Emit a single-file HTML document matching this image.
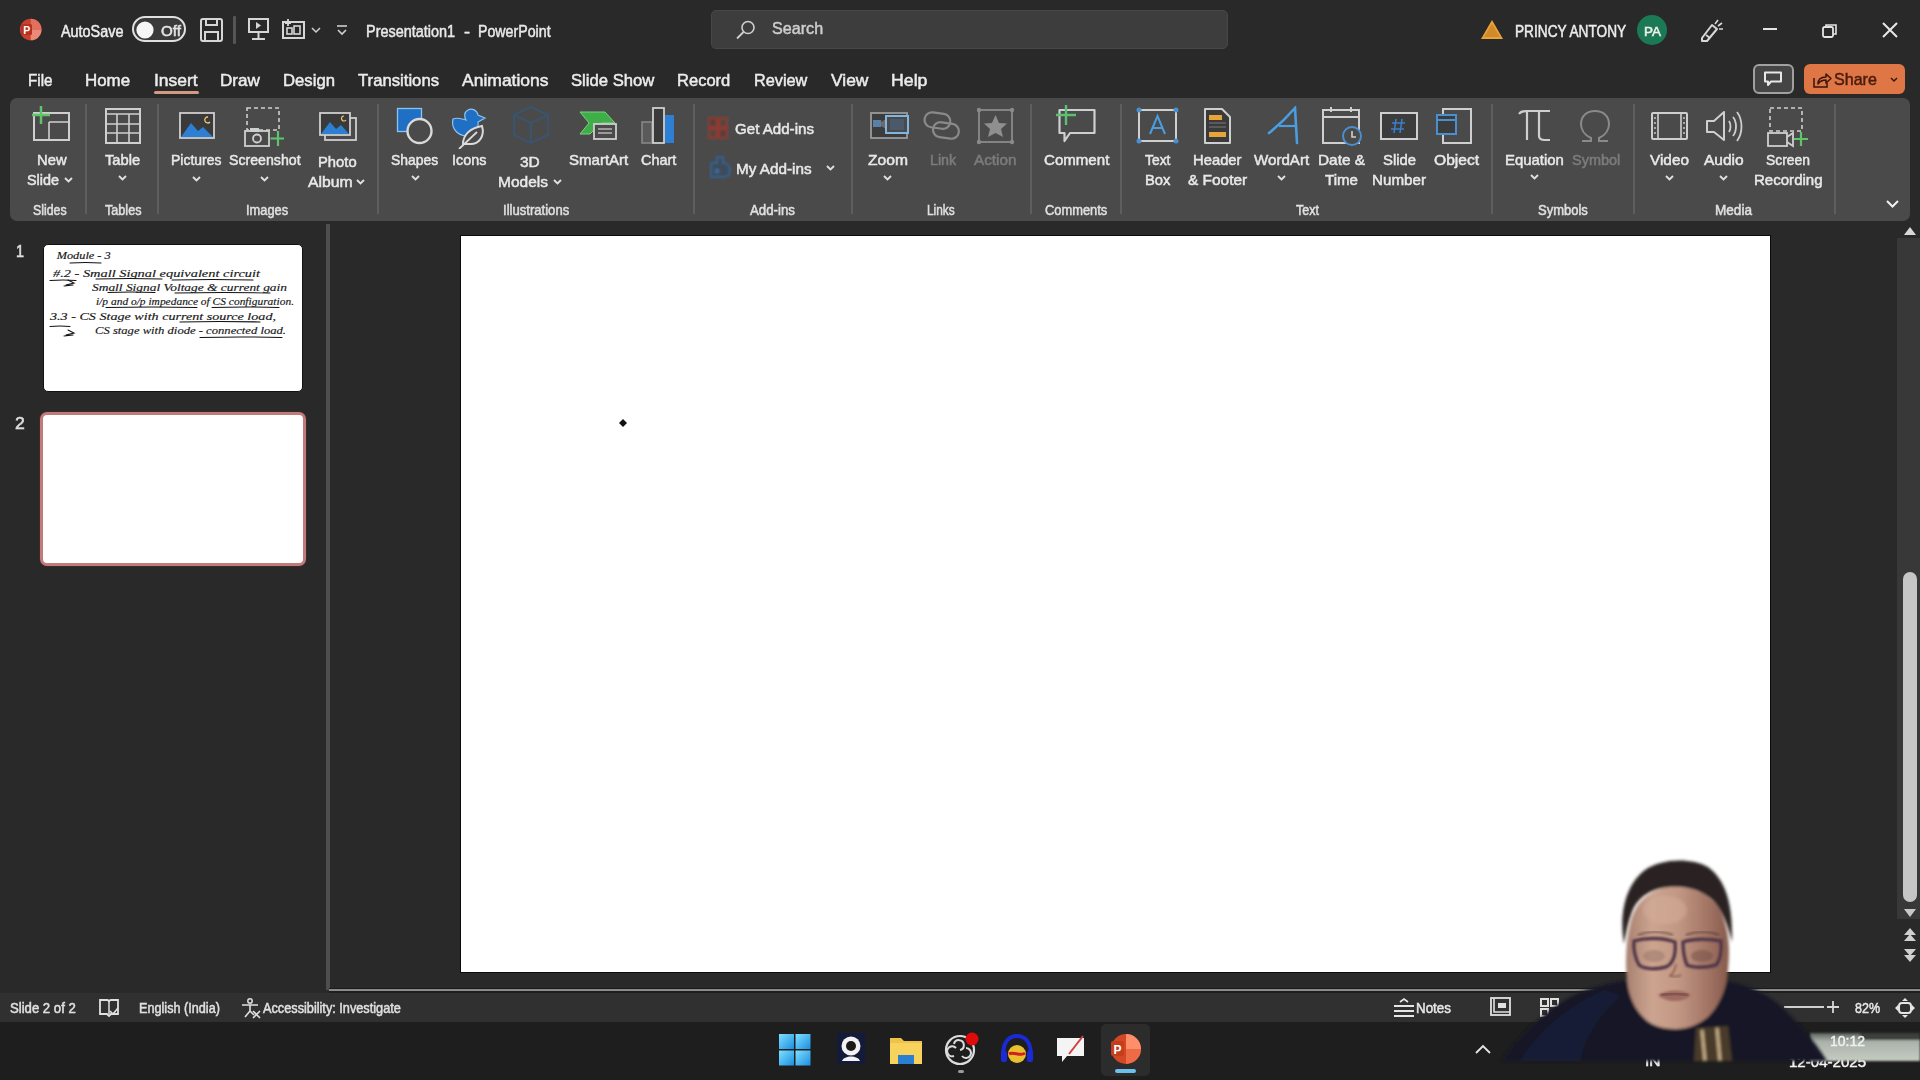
<!DOCTYPE html><html><head><meta charset="utf-8"><style>
html,body{margin:0;padding:0;width:1920px;height:1080px;overflow:hidden;background:#292929;}
body{position:relative;font-family:"Liberation Sans",sans-serif;}
.t{position:absolute;white-space:nowrap;transform-origin:0 0;-webkit-text-stroke:0.5px currentColor;}
.r{position:absolute;display:block;}
</style></head><body>
<div class="r" style="left:0px;top:0px;width:1920px;height:222px;background:#292929;"></div>
<div class="r" style="left:711px;top:10px;width:517px;height:39px;background:#3d3d3d;border-radius:5px;box-sizing:border-box;border:1px solid #474747;"></div>
<div class="r" style="left:10px;top:98px;width:1900px;height:123px;background:#4a4a4a;border-radius:7px;"></div>
<svg class="r" style="left:17px;top:17px;" width="28" height="26" viewBox="0 0 28 26">
<circle cx="13.7" cy="12.5" r="10.8" fill="#c8402e"/>
<path d="M13.7 1.7 A10.8 10.8 0 0 1 24.5 12.5 L13.7 12.5 Z" fill="#e2705e"/>
<path d="M24.5 12.5 A10.8 10.8 0 0 1 13.7 23.3 L13.7 12.5 Z" fill="#ec8a78"/>
<rect x="4" y="7" width="11" height="11" rx="1.5" fill="#b8301e"/>
<text x="6.2" y="16.6" font-family="Liberation Sans" font-weight="700" font-size="10.5" fill="#fff">P</text>
</svg>
<div class="t" style="left:61.00px;top:21.96px;font-size:16px;line-height:19px;color:#ececec;font-weight:400;transform:scaleX(0.8991);">AutoSave</div>
<div class="r" style="left:132px;top:16px;width:54px;height:26px;background:#3a3a3a;box-sizing:border-box;border:2px solid #e0e0e0;border-radius:13px;"></div>
<svg class="r" style="left:135.7px;top:20.9px;" width="18" height="18" viewBox="0 0 18 18"><circle cx="9" cy="9" r="8.6" fill="#f6f6f6"/></svg>
<div class="t" style="left:161.00px;top:22.85px;font-size:14px;line-height:17px;color:#e4e4e4;font-weight:400;transform:scaleX(1.0811);">Off</div>
<svg class="r" style="left:199px;top:17px;" width="26" height="26" viewBox="0 0 26 26">
<rect x="2" y="2" width="21" height="22" rx="2" fill="none" stroke="#d6d6d6" stroke-width="2"/>
<rect x="7" y="2" width="11" height="6" fill="none" stroke="#d6d6d6" stroke-width="2"/>
<rect x="6" y="15" width="13" height="9" fill="none" stroke="#d6d6d6" stroke-width="2"/>
</svg>
<div class="r" style="left:233px;top:16px;width:3px;height:28px;background:#555555;border-radius:1px;"></div>
<svg class="r" style="left:246px;top:16px;" width="26" height="26" viewBox="0 0 26 26">
<rect x="3" y="3" width="19" height="13" fill="none" stroke="#d6d6d6" stroke-width="2"/>
<path d="M10 6 L15 9.5 L10 13 Z" fill="#d6d6d6"/>
<path d="M12.5 16 V23 M6 23 H19" stroke="#d6d6d6" stroke-width="2"/>
</svg>
<svg class="r" style="left:281px;top:17px;" width="26" height="24" viewBox="0 0 26 24">
<rect x="2" y="5" width="21" height="16" fill="none" stroke="#d6d6d6" stroke-width="2"/>
<path d="M7 2 V9 M4 6 H10" stroke="#d6d6d6" stroke-width="1.8"/>
<rect x="6" y="11" width="5" height="6" fill="none" stroke="#d6d6d6" stroke-width="1.6"/>
<rect x="13" y="9" width="6" height="8" fill="none" stroke="#d6d6d6" stroke-width="1.6"/>
</svg>
<svg class="r" style="left:310.0px;top:26.0px;" width="12" height="8.0" viewBox="0 0 12 8.0"><path d="M2 2 L6.0 6.0 L10 2" fill="none" stroke="#d0d0d0" stroke-width="1.5"/></svg>
<svg class="r" style="left:334px;top:22px;" width="16" height="16" viewBox="0 0 16 16"><path d="M3 4 H13" stroke="#d0d0d0" stroke-width="1.6"/><path d="M4 8 L8 12 L12 8" fill="none" stroke="#d0d0d0" stroke-width="1.6"/></svg>
<div class="t" style="left:365.60px;top:21.96px;font-size:16px;line-height:19px;color:#e8e8e8;font-weight:400;transform:scaleX(0.9027);">Presentation1</div>
<div class="t" style="left:464.00px;top:21.96px;font-size:16px;line-height:19px;color:#e8e8e8;font-weight:400;transform:scaleX(1.1321);">-</div>
<div class="t" style="left:478.00px;top:21.96px;font-size:16px;line-height:19px;color:#e8e8e8;font-weight:400;transform:scaleX(0.8875);">PowerPoint</div>
<svg class="r" style="left:734px;top:18px;" width="24" height="24" viewBox="0 0 24 24">
<circle cx="14" cy="9.5" r="6" fill="none" stroke="#cfcfcf" stroke-width="1.6"/>
<path d="M9.5 14 L3 20.5" stroke="#cfcfcf" stroke-width="1.8"/>
</svg>
<div class="t" style="left:771.70px;top:19.41px;font-size:17px;line-height:20px;color:#cdcdcd;font-weight:400;transform:scaleX(0.9499);">Search</div>
<svg class="r" style="left:1479px;top:18px;" width="26" height="24" viewBox="0 0 26 24">
<path d="M13 2 L24 21 L2 21 Z" fill="#e8a23a"/>
<path d="M13 6 L21 19 L5 19 Z" fill="#d08a28"/>
</svg>
<div class="t" style="left:1514.60px;top:21.86px;font-size:16px;line-height:19px;color:#ececec;font-weight:400;transform:scaleX(0.8547);">PRINCY ANTONY</div>
<svg class="r" style="left:1636px;top:14px;" width="32" height="32" viewBox="0 0 32 32"><circle cx="16" cy="16" r="15" fill="#1b7a55"/></svg>
<div class="t" style="left:1643.50px;top:23.70px;font-size:13px;line-height:16px;color:#f0f0f0;font-weight:400;transform:scaleX(1.0366);">PA</div>
<svg class="r" style="left:1698px;top:17px;" width="28" height="26" viewBox="0 0 28 26">
<path d="M4 21 L14 8 L19 12 L9 24 L4 24 Z" fill="none" stroke="#d8d8d8" stroke-width="2" stroke-linejoin="round"/>
<path d="M8 18 L12 21" stroke="#d8d8d8" stroke-width="1.6"/>
<path d="M17 7 L20 3 M20 9 L24 6 M21 12 L25 12" stroke="#d8d8d8" stroke-width="1.6"/>
</svg>
<div class="r" style="left:1763px;top:28px;width:14px;height:2px;background:#e4e4e4;"></div>
<svg class="r" style="left:1821px;top:22px;" width="18" height="18" viewBox="0 0 18 18">
<rect x="2" y="5" width="10" height="10" rx="1.5" fill="none" stroke="#e4e4e4" stroke-width="1.8"/>
<path d="M5 5 V3 H15 V12 H12" fill="none" stroke="#e4e4e4" stroke-width="1.6"/>
</svg>
<svg class="r" style="left:1881px;top:21px;" width="18" height="18" viewBox="0 0 18 18"><path d="M2 2 L16 16 M16 2 L2 16" stroke="#e8e8e8" stroke-width="2"/></svg>
<div class="r" style="left:1753px;top:64px;width:41px;height:30px;background:#454545;box-sizing:border-box;border:2px solid #a0a0a0;border-radius:6px;"></div>
<svg class="r" style="left:1762px;top:70px;" width="24" height="18" viewBox="0 0 24 18">
<path d="M3 2.5 H19 V11.5 H9 L6 15 V11.5 H3 Z" fill="none" stroke="#e8e8e8" stroke-width="2" stroke-linejoin="round"/>
</svg>
<div class="r" style="left:1804px;top:64px;width:101px;height:30px;background:#df7646;border-radius:6px;"></div>
<svg class="r" style="left:1810px;top:70px;" width="24" height="20" viewBox="0 0 24 20">
<path d="M4 8 V17 H17 V13" fill="none" stroke="#3a160a" stroke-width="1.5"/>
<path d="M8 14 C8 9 11 7 16 7 V4 L21 8.5 L16 13 V10 C12 10 10 11 8 14 Z" fill="none" stroke="#3a160a" stroke-width="1.5" stroke-linejoin="round"/>
</svg>
<div class="t" style="left:1834.00px;top:69.81px;font-size:17px;line-height:20px;color:#4a1c0c;font-weight:400;transform:scaleX(0.9449);">Share</div>
<svg class="r" style="left:1889.0px;top:75.5px;" width="10" height="7.0" viewBox="0 0 10 7.0"><path d="M2 2 L5.0 5.0 L8 2" fill="none" stroke="#3a160a" stroke-width="1.5"/></svg>
<div class="t" style="left:27.50px;top:71.11px;font-size:17px;line-height:20px;color:#ececec;font-weight:400;transform:scaleX(0.8942);">File</div>
<div class="t" style="left:84.50px;top:71.11px;font-size:17px;line-height:20px;color:#ececec;font-weight:400;transform:scaleX(0.9934);">Home</div>
<div class="t" style="left:153.80px;top:71.11px;font-size:17px;line-height:20px;color:#ececec;font-weight:400;transform:scaleX(1.0282);">Insert</div>
<div class="t" style="left:220.00px;top:71.11px;font-size:17px;line-height:20px;color:#ececec;font-weight:400;transform:scaleX(1.0050);">Draw</div>
<div class="t" style="left:282.50px;top:71.11px;font-size:17px;line-height:20px;color:#ececec;font-weight:400;transform:scaleX(0.9830);">Design</div>
<div class="t" style="left:358.00px;top:71.11px;font-size:17px;line-height:20px;color:#ececec;font-weight:400;transform:scaleX(0.9818);">Transitions</div>
<div class="t" style="left:461.70px;top:71.11px;font-size:17px;line-height:20px;color:#ececec;font-weight:400;transform:scaleX(1.0297);">Animations</div>
<div class="t" style="left:570.50px;top:71.11px;font-size:17px;line-height:20px;color:#ececec;font-weight:400;transform:scaleX(0.9800);">Slide Show</div>
<div class="t" style="left:676.50px;top:71.11px;font-size:17px;line-height:20px;color:#ececec;font-weight:400;transform:scaleX(0.9726);">Record</div>
<div class="t" style="left:754.00px;top:71.11px;font-size:17px;line-height:20px;color:#ececec;font-weight:400;transform:scaleX(0.9571);">Review</div>
<div class="t" style="left:831.40px;top:71.11px;font-size:17px;line-height:20px;color:#ececec;font-weight:400;transform:scaleX(1.0245);">View</div>
<div class="t" style="left:891.00px;top:71.11px;font-size:17px;line-height:20px;color:#ececec;font-weight:400;transform:scaleX(1.0429);">Help</div>
<div class="r" style="left:154px;top:91px;width:45px;height:3px;background:#d49a7f;border-radius:2px;"></div>
<div class="r" style="left:85px;top:104px;width:2px;height:110px;background:#5e5e5e;"></div>
<div class="r" style="left:157px;top:104px;width:2px;height:110px;background:#5e5e5e;"></div>
<div class="r" style="left:377px;top:104px;width:2px;height:110px;background:#5e5e5e;"></div>
<div class="r" style="left:693px;top:104px;width:2px;height:110px;background:#5e5e5e;"></div>
<div class="r" style="left:851px;top:104px;width:2px;height:110px;background:#5e5e5e;"></div>
<div class="r" style="left:1030px;top:104px;width:2px;height:110px;background:#5e5e5e;"></div>
<div class="r" style="left:1120px;top:104px;width:2px;height:110px;background:#5e5e5e;"></div>
<div class="r" style="left:1491px;top:104px;width:2px;height:110px;background:#5e5e5e;"></div>
<div class="r" style="left:1633px;top:104px;width:2px;height:110px;background:#5e5e5e;"></div>
<div class="r" style="left:1834px;top:104px;width:2px;height:110px;background:#5e5e5e;"></div>
<div class="t" style="left:36.60px;top:150.80px;font-size:15px;line-height:18px;color:#e8e8e8;font-weight:400;transform:scaleX(0.9867);">New</div>
<div class="t" style="left:27.30px;top:170.80px;font-size:15px;line-height:18px;color:#e8e8e8;font-weight:400;transform:scaleX(0.9611);">Slide</div>
<div class="t" style="left:104.90px;top:150.80px;font-size:15px;line-height:18px;color:#e8e8e8;font-weight:400;transform:scaleX(0.9805);">Table</div>
<div class="t" style="left:171.20px;top:150.80px;font-size:15px;line-height:18px;color:#e8e8e8;font-weight:400;transform:scaleX(0.9299);">Pictures</div>
<div class="t" style="left:229.20px;top:150.80px;font-size:15px;line-height:18px;color:#e8e8e8;font-weight:400;transform:scaleX(0.9433);">Screenshot</div>
<div class="t" style="left:318.20px;top:152.80px;font-size:15px;line-height:18px;color:#e8e8e8;font-weight:400;transform:scaleX(0.9847);">Photo</div>
<div class="t" style="left:307.70px;top:172.50px;font-size:15px;line-height:18px;color:#e8e8e8;font-weight:400;transform:scaleX(1.0494);">Album</div>
<div class="t" style="left:390.60px;top:150.80px;font-size:15px;line-height:18px;color:#e8e8e8;font-weight:400;transform:scaleX(0.9293);">Shapes</div>
<div class="t" style="left:451.60px;top:150.80px;font-size:15px;line-height:18px;color:#e8e8e8;font-weight:400;transform:scaleX(0.9582);">Icons</div>
<div class="t" style="left:520.40px;top:152.50px;font-size:15px;line-height:18px;color:#e8e8e8;font-weight:400;transform:scaleX(1.0313);">3D</div>
<div class="t" style="left:498.00px;top:172.50px;font-size:15px;line-height:18px;color:#e8e8e8;font-weight:400;transform:scaleX(1.0331);">Models</div>
<div class="t" style="left:568.50px;top:150.80px;font-size:15px;line-height:18px;color:#e8e8e8;font-weight:400;transform:scaleX(1.0017);">SmartArt</div>
<div class="t" style="left:640.70px;top:150.80px;font-size:15px;line-height:18px;color:#e8e8e8;font-weight:400;transform:scaleX(0.9619);">Chart</div>
<div class="t" style="left:734.70px;top:119.70px;font-size:15px;line-height:18px;color:#e8e8e8;font-weight:400;transform:scaleX(1.0077);">Get Add-ins</div>
<div class="t" style="left:735.80px;top:159.80px;font-size:15px;line-height:18px;color:#e8e8e8;font-weight:400;transform:scaleX(1.0189);">My Add-ins</div>
<div class="t" style="left:868.30px;top:150.80px;font-size:15px;line-height:18px;color:#e8e8e8;font-weight:400;transform:scaleX(1.0418);">Zoom</div>
<div class="t" style="left:1044.00px;top:150.80px;font-size:15px;line-height:18px;color:#e8e8e8;font-weight:400;transform:scaleX(1.0046);">Comment</div>
<div class="t" style="left:1144.70px;top:150.80px;font-size:15px;line-height:18px;color:#e8e8e8;font-weight:400;transform:scaleX(0.9236);">Text</div>
<div class="t" style="left:1144.70px;top:170.80px;font-size:15px;line-height:18px;color:#e8e8e8;font-weight:400;transform:scaleX(0.9845);">Box</div>
<div class="t" style="left:1193.20px;top:150.80px;font-size:15px;line-height:18px;color:#e8e8e8;font-weight:400;transform:scaleX(0.9858);">Header</div>
<div class="t" style="left:1188.20px;top:170.80px;font-size:15px;line-height:18px;color:#e8e8e8;font-weight:400;transform:scaleX(1.0278);">&amp; Footer</div>
<div class="t" style="left:1254.40px;top:150.80px;font-size:15px;line-height:18px;color:#e8e8e8;font-weight:400;transform:scaleX(1.0073);">WordArt</div>
<div class="t" style="left:1317.50px;top:150.80px;font-size:15px;line-height:18px;color:#e8e8e8;font-weight:400;transform:scaleX(1.0261);">Date &amp;</div>
<div class="t" style="left:1325.00px;top:170.80px;font-size:15px;line-height:18px;color:#e8e8e8;font-weight:400;transform:scaleX(1.0061);">Time</div>
<div class="t" style="left:1382.70px;top:150.80px;font-size:15px;line-height:18px;color:#e8e8e8;font-weight:400;transform:scaleX(0.9910);">Slide</div>
<div class="t" style="left:1371.70px;top:170.80px;font-size:15px;line-height:18px;color:#e8e8e8;font-weight:400;transform:scaleX(1.0131);">Number</div>
<div class="t" style="left:1433.80px;top:150.80px;font-size:15px;line-height:18px;color:#e8e8e8;font-weight:400;transform:scaleX(1.0415);">Object</div>
<div class="t" style="left:1505.00px;top:150.80px;font-size:15px;line-height:18px;color:#e8e8e8;font-weight:400;transform:scaleX(0.9932);">Equation</div>
<div class="t" style="left:1650.00px;top:150.80px;font-size:15px;line-height:18px;color:#e8e8e8;font-weight:400;transform:scaleX(1.0236);">Video</div>
<div class="t" style="left:1703.60px;top:150.80px;font-size:15px;line-height:18px;color:#e8e8e8;font-weight:400;transform:scaleX(1.0339);">Audio</div>
<div class="t" style="left:1766.00px;top:150.80px;font-size:15px;line-height:18px;color:#e8e8e8;font-weight:400;transform:scaleX(0.9263);">Screen</div>
<div class="t" style="left:1753.50px;top:171.00px;font-size:15px;line-height:18px;color:#e8e8e8;font-weight:400;transform:scaleX(1.0029);">Recording</div>
<div class="t" style="left:929.50px;top:150.80px;font-size:15px;line-height:18px;color:#7c7c7c;font-weight:400;transform:scaleX(0.9529);">Link</div>
<div class="t" style="left:974.00px;top:150.80px;font-size:15px;line-height:18px;color:#7c7c7c;font-weight:400;transform:scaleX(1.0192);">Action</div>
<div class="t" style="left:1572.20px;top:150.80px;font-size:15px;line-height:18px;color:#7c7c7c;font-weight:400;transform:scaleX(0.9660);">Symbol</div>
<div class="t" style="left:32.70px;top:201.65px;font-size:14px;line-height:17px;color:#e0e0e0;font-weight:400;transform:scaleX(0.8819);">Slides</div>
<div class="t" style="left:104.50px;top:201.65px;font-size:14px;line-height:17px;color:#e0e0e0;font-weight:400;transform:scaleX(0.9012);">Tables</div>
<div class="t" style="left:246.40px;top:201.65px;font-size:14px;line-height:17px;color:#e0e0e0;font-weight:400;transform:scaleX(0.9172);">Images</div>
<div class="t" style="left:503.20px;top:201.65px;font-size:14px;line-height:17px;color:#e0e0e0;font-weight:400;transform:scaleX(0.9350);">Illustrations</div>
<div class="t" style="left:750.00px;top:201.65px;font-size:14px;line-height:17px;color:#e0e0e0;font-weight:400;transform:scaleX(0.9474);">Add-ins</div>
<div class="t" style="left:927.00px;top:201.65px;font-size:14px;line-height:17px;color:#e0e0e0;font-weight:400;transform:scaleX(0.8471);">Links</div>
<div class="t" style="left:1044.70px;top:201.65px;font-size:14px;line-height:17px;color:#e0e0e0;font-weight:400;transform:scaleX(0.9202);">Comments</div>
<div class="t" style="left:1295.50px;top:201.65px;font-size:14px;line-height:17px;color:#e0e0e0;font-weight:400;transform:scaleX(0.8949);">Text</div>
<div class="t" style="left:1537.60px;top:201.65px;font-size:14px;line-height:17px;color:#e0e0e0;font-weight:400;transform:scaleX(0.9274);">Symbols</div>
<div class="t" style="left:1715.00px;top:201.65px;font-size:14px;line-height:17px;color:#e0e0e0;font-weight:400;transform:scaleX(0.9685);">Media</div>
<svg class="r" style="left:62.5px;top:175.75px;" width="11" height="7.5" viewBox="0 0 11 7.5"><path d="M2 2 L5.5 5.5 L9 2" fill="none" stroke="#e0e0e0" stroke-width="1.9"/></svg>
<svg class="r" style="left:117.0px;top:173.75px;" width="11" height="7.5" viewBox="0 0 11 7.5"><path d="M2 2 L5.5 5.5 L9 2" fill="none" stroke="#e0e0e0" stroke-width="1.9"/></svg>
<svg class="r" style="left:190.5px;top:175.25px;" width="11" height="7.5" viewBox="0 0 11 7.5"><path d="M2 2 L5.5 5.5 L9 2" fill="none" stroke="#e0e0e0" stroke-width="1.9"/></svg>
<svg class="r" style="left:258.5px;top:175.25px;" width="11" height="7.5" viewBox="0 0 11 7.5"><path d="M2 2 L5.5 5.5 L9 2" fill="none" stroke="#e0e0e0" stroke-width="1.9"/></svg>
<svg class="r" style="left:354.5px;top:177.75px;" width="11" height="7.5" viewBox="0 0 11 7.5"><path d="M2 2 L5.5 5.5 L9 2" fill="none" stroke="#e0e0e0" stroke-width="1.9"/></svg>
<svg class="r" style="left:409.5px;top:174.25px;" width="11" height="7.5" viewBox="0 0 11 7.5"><path d="M2 2 L5.5 5.5 L9 2" fill="none" stroke="#e0e0e0" stroke-width="1.9"/></svg>
<svg class="r" style="left:551.5px;top:177.75px;" width="11" height="7.5" viewBox="0 0 11 7.5"><path d="M2 2 L5.5 5.5 L9 2" fill="none" stroke="#e0e0e0" stroke-width="1.9"/></svg>
<svg class="r" style="left:824.5px;top:163.75px;" width="11" height="7.5" viewBox="0 0 11 7.5"><path d="M2 2 L5.5 5.5 L9 2" fill="none" stroke="#e0e0e0" stroke-width="1.9"/></svg>
<svg class="r" style="left:881.8px;top:174.05px;" width="11" height="7.5" viewBox="0 0 11 7.5"><path d="M2 2 L5.5 5.5 L9 2" fill="none" stroke="#e0e0e0" stroke-width="1.9"/></svg>
<svg class="r" style="left:1276.2px;top:174.25px;" width="11" height="7.5" viewBox="0 0 11 7.5"><path d="M2 2 L5.5 5.5 L9 2" fill="none" stroke="#e0e0e0" stroke-width="1.9"/></svg>
<svg class="r" style="left:1528.7px;top:173.25px;" width="11" height="7.5" viewBox="0 0 11 7.5"><path d="M2 2 L5.5 5.5 L9 2" fill="none" stroke="#e0e0e0" stroke-width="1.9"/></svg>
<svg class="r" style="left:1663.5px;top:173.75px;" width="11" height="7.5" viewBox="0 0 11 7.5"><path d="M2 2 L5.5 5.5 L9 2" fill="none" stroke="#e0e0e0" stroke-width="1.9"/></svg>
<svg class="r" style="left:1718.0px;top:173.75px;" width="11" height="7.5" viewBox="0 0 11 7.5"><path d="M2 2 L5.5 5.5 L9 2" fill="none" stroke="#e0e0e0" stroke-width="1.9"/></svg>
<svg class="r" style="left:1885.0px;top:199.25px;" width="15" height="9.5" viewBox="0 0 15 9.5"><path d="M2 2 L7.5 7.5 L13 2" fill="none" stroke="#f0f0f0" stroke-width="2"/></svg>
<svg class="r" style="left:30px;top:104px;" width="44" height="40" viewBox="0 0 44 40">
<rect x="4" y="9" width="35" height="27" fill="none" stroke="#cfcfcf" stroke-width="2"/>
<path d="M19 18 V36 M19 18 H38" stroke="#cfcfcf" stroke-width="1.6"/>
<path d="M11 2 V20 M2 11 H20" stroke="#5fc46a" stroke-width="2.5"/>
</svg>
<svg class="r" style="left:103px;top:106px;" width="40" height="40" viewBox="0 0 40 40">
<rect x="3" y="3" width="34" height="34" fill="none" stroke="#cfcfcf" stroke-width="2"/>
<path d="M3 8 H37 M3 18 H37 M3 27 H37 M14 8 V37 M26 8 V37" stroke="#cfcfcf" stroke-width="1.6"/>
</svg>
<svg class="r" style="left:177px;top:110px;" width="40" height="32" viewBox="0 0 40 32">
<rect x="3" y="3" width="34" height="25" fill="#3a3a3a" stroke="#cfcfcf" stroke-width="1.8"/>
<path d="M4 27 L14 13 L21 21 L26 17 L36 27 Z" fill="#2d7fd3"/>
<path d="M31 7 a3 3 0 1 0 2 5" fill="none" stroke="#e8c870" stroke-width="1.3"/>
</svg>
<svg class="r" style="left:242px;top:106px;" width="42" height="42" viewBox="0 0 42 42">
<rect x="5" y="2" width="32" height="22" fill="none" stroke="#cfcfcf" stroke-width="1.6" stroke-dasharray="4 3"/>
<rect x="3" y="25" width="24" height="15" fill="#4a4a4a" stroke="#cfcfcf" stroke-width="1.8"/>
<rect x="8" y="22" width="9" height="4" fill="#cfcfcf"/>
<circle cx="15" cy="32.5" r="4" fill="none" stroke="#cfcfcf" stroke-width="1.8"/>
<path d="M36 25 V40 M28.5 32.5 H43" stroke="#5fc46a" stroke-width="2.2"/>
</svg>
<svg class="r" style="left:317px;top:110px;" width="42" height="33" viewBox="0 0 42 33">
<rect x="8" y="8" width="31" height="22" fill="none" stroke="#cfcfcf" stroke-width="1.8"/>
<rect x="3" y="3" width="30" height="22" fill="#3a3a3a" stroke="#cfcfcf" stroke-width="1.8"/>
<path d="M4 24 L13 12 L19 19 L24 15 L32 24 Z" fill="#2d7fd3"/>
<path d="M27 6 a2.5 2.5 0 1 0 2 4" fill="none" stroke="#e8c870" stroke-width="1.2"/>
</svg>
<svg class="r" style="left:394px;top:105px;" width="44" height="44" viewBox="0 0 44 44">
<rect x="3.5" y="3.5" width="24" height="23" fill="#1f6fc4" stroke="#8cc4f0" stroke-width="1.3"/>
<circle cx="25.5" cy="26" r="12" fill="#4a4a4a" stroke="#dadada" stroke-width="2.4"/>
</svg>
<svg class="r" style="left:448px;top:105px;" width="42" height="44" viewBox="0 0 42 44">
<path d="M5 14 C3 22 8 30 18 31 C26 31 31 25 30 17 L37 13 L30 10 C29 5 24 3 20 5 C16 7 16 12 18 15 C14 14 9 12 5 14 Z" fill="#1f6fc4" stroke="#8cc4f0" stroke-width="1.2"/>
<path d="M15 39 C15 30 22 23 34 21 C37 31 31 40 21 39 Z" fill="#4a4a4a" stroke="#dadada" stroke-width="2"/>
<path d="M11 44 L29 27" stroke="#dadada" stroke-width="1.8"/>
</svg>
<svg class="r" style="left:510px;top:104px;" width="42" height="42" viewBox="0 0 42 42">
<path d="M21 3 L38 11 V31 L21 39 L4 31 V11 Z" fill="none" stroke="#3a5570" stroke-width="2.4" opacity="0.85"/>
<path d="M4 11 L21 19 L38 11 M21 19 V39" fill="none" stroke="#3a5570" stroke-width="2.4" opacity="0.85"/>
</svg>
<svg class="r" style="left:578px;top:110px;" width="42" height="32" viewBox="0 0 42 32">
<path d="M2 2 H27 L37 13 H23 L12 24 H2 L11 13 Z" fill="#3fae49" stroke="#7ad27f" stroke-width="1"/>
<rect x="16" y="14" width="22" height="15" fill="#4a4a4a" stroke="#cfcfcf" stroke-width="1.8"/>
<path d="M20 19 H34 M20 23 H34" stroke="#9a9a9a" stroke-width="2"/>
</svg>
<svg class="r" style="left:638px;top:104px;" width="40" height="42" viewBox="0 0 40 42">
<rect x="4" y="18" width="10" height="21" fill="#5a5a5a" stroke="#8a8a8a" stroke-width="1.5"/>
<rect x="15" y="4" width="11" height="35" fill="#3a3a3a" stroke="#cfcfcf" stroke-width="1.8"/>
<rect x="27" y="11" width="9" height="28" fill="#2d7fd3"/>
</svg>
<svg class="r" style="left:704px;top:114px;" width="28" height="30" viewBox="0 0 28 30">
<defs><filter id="fa"><feGaussianBlur stdDeviation="1.1"/></filter></defs>
<g filter="url(#fa)">
<rect x="5" y="4" width="8" height="9" fill="#5a3e3a" stroke="#8e3a32" stroke-width="2"/>
<rect x="15" y="4" width="8" height="9" fill="#54443c" stroke="#8e3a32" stroke-width="2"/>
<rect x="5" y="15" width="8" height="9" fill="#54443c" stroke="#8e3a32" stroke-width="2"/>
<rect x="15" y="15" width="8" height="9" fill="#5a3e3a" stroke="#8e3a32" stroke-width="2"/>
</g></svg>
<svg class="r" style="left:706px;top:152px;" width="28" height="28" viewBox="0 0 28 28">
<defs><filter id="fb"><feGaussianBlur stdDeviation="1.1"/></filter></defs>
<g filter="url(#fb)">
<path d="M5 11 H11 V5 H17 V11 C22 11 24 15 24 19 C24 23 21 25 17 25 H5 Z" fill="#3e4c5a" stroke="#35628e" stroke-width="2"/>
<circle cx="11" cy="19" r="2.5" fill="#3a6a9a"/>
</g></svg>
<svg class="r" style="left:868px;top:110px;" width="44" height="32" viewBox="0 0 44 32">
<rect x="3" y="3" width="36" height="25" fill="#3c3c3c" stroke="#9a9a9a" stroke-width="1.8"/>
<rect x="5" y="10" width="8" height="7" fill="#5a7fa8" />
<path d="M13 12 L18 9 V19 L13 16 Z" fill="#6a6a6a"/>
<rect x="18" y="6" width="22" height="17" fill="#4a4a4a" stroke="#7fb5e0" stroke-width="2"/>
<rect x="22" y="9" width="14" height="11" fill="#4a5a6a"/>
</svg>
<svg class="r" style="left:922px;top:110px;" width="40" height="32" viewBox="0 0 40 32">
<rect x="2.5" y="3" width="26" height="15" rx="7.5" fill="none" stroke="#8a8a8a" stroke-width="2.2" transform="rotate(8 15 10)"/>
<rect x="11" y="13" width="26" height="15" rx="7.5" fill="none" stroke="#8a8a8a" stroke-width="2.2" transform="rotate(8 24 20)"/>
</svg>
<svg class="r" style="left:976px;top:107px;" width="40" height="38" viewBox="0 0 40 38">
<rect x="3" y="3" width="33" height="32" fill="none" stroke="#8a8a8a" stroke-width="1.8"/>
<circle cx="3" cy="3" r="2.2" fill="#8a8a8a"/><circle cx="36" cy="3" r="2.2" fill="#8a8a8a"/>
<circle cx="3" cy="35" r="2.2" fill="#8a8a8a"/><circle cx="36" cy="35" r="2.2" fill="#8a8a8a"/>
<path d="M19.5 8 L23 16 L31 16.5 L25 22 L27 30 L19.5 26 L12 30 L14 22 L8 16.5 L16 16 Z" fill="#8f8f8f"/>
</svg>
<svg class="r" style="left:1055px;top:103px;" width="44" height="42" viewBox="0 0 44 42">
<path d="M4.5 7 H39.5 V30 H15 L9.5 38 V30 H4.5 Z" fill="none" stroke="#cfcfcf" stroke-width="2.2" stroke-linejoin="round"/>
<path d="M11 2 V22 M1 12 H21" stroke="#5cc070" stroke-width="2.4"/>
</svg>
<svg class="r" style="left:1136px;top:107px;" width="44" height="38" viewBox="0 0 44 38">
<rect x="3" y="3" width="37" height="31" fill="none" stroke="#cfcfcf" stroke-width="2"/>
<circle cx="3" cy="3" r="2.5" fill="#4a90d0"/><circle cx="40" cy="3" r="2.5" fill="#4a90d0"/>
<circle cx="3" cy="34" r="2.5" fill="#4a90d0"/><circle cx="40" cy="34" r="2.5" fill="#4a90d0"/>
<path d="M14 27 L21.5 9 L29 27 M17 21 H26" fill="none" stroke="#4a9ee0" stroke-width="2"/>
</svg>
<svg class="r" style="left:1202px;top:106px;" width="32" height="40" viewBox="0 0 32 40">
<path d="M3 3 H20 L28 11 V37 H3 Z" fill="#3a3a3a" stroke="#cfcfcf" stroke-width="2" stroke-linejoin="round"/>
<rect x="7" y="9" width="13" height="5" fill="#e8a43a"/>
<rect x="7" y="26" width="17" height="5" fill="#e8a43a"/>
<path d="M7 17 H24 M7 21 H24" stroke="#5a5a5a" stroke-width="2"/>
</svg>
<svg class="r" style="left:1265px;top:106px;" width="36" height="40" viewBox="0 0 36 40">
<path d="M4 27 C10 22 18 16 30 2 L32 37" fill="none" stroke="#4a9ee0" stroke-width="2.6" stroke-linecap="round"/>
<path d="M14 20 L31 20" stroke="#4a9ee0" stroke-width="2.2"/>
</svg>
<svg class="r" style="left:1320px;top:106px;" width="44" height="42" viewBox="0 0 44 42">
<rect x="3" y="4" width="36" height="33" fill="none" stroke="#cfcfcf" stroke-width="2"/>
<path d="M3 11 H39 M11 1 V6 M31 1 V6" stroke="#cfcfcf" stroke-width="2"/>
<circle cx="32" cy="30" r="9" fill="#4a4a4a" stroke="#4a8fd0" stroke-width="2"/>
<path d="M32 25 V31 H36" fill="none" stroke="#cfcfcf" stroke-width="1.6"/>
</svg>
<svg class="r" style="left:1378px;top:110px;" width="42" height="32" viewBox="0 0 42 32">
<rect x="3" y="3" width="36" height="26" fill="#3c3c3c" stroke="#cfcfcf" stroke-width="2"/>
<path d="M18 9 L16 23 M24 9 L22 23 M14 13 H27 M13 19 H26" stroke="#3a7fc8" stroke-width="1.6"/>
</svg>
<svg class="r" style="left:1434px;top:106px;" width="42" height="40" viewBox="0 0 42 40">
<rect x="9" y="3" width="28" height="34" fill="none" stroke="#cfcfcf" stroke-width="2"/>
<rect x="3" y="9" width="19" height="19" fill="#3c3c3c" stroke="#4a90d0" stroke-width="2"/>
<path d="M3 14 H22" stroke="#4a90d0" stroke-width="2"/>
</svg>
<svg class="r" style="left:1516px;top:108px;" width="38" height="36" viewBox="0 0 38 36">
<path d="M3 6 C5 3 8 3 12 3 H34" fill="none" stroke="#cfcfcf" stroke-width="2.2"/>
<path d="M11 3 V32" stroke="#cfcfcf" stroke-width="2.2"/>
<path d="M23 3 V28 C23 31 25 32 29 32 H34" fill="none" stroke="#cfcfcf" stroke-width="2.2"/>
</svg>
<svg class="r" style="left:1578px;top:108px;" width="36" height="38" viewBox="0 0 36 38">
<path d="M4 33 H13 V30 C6 27 3 21 3 16 C3 8 9 3 17 3 C25 3 31 8 31 16 C31 21 28 27 21 30 V33 H30" fill="none" stroke="#8a8a8a" stroke-width="2"/>
</svg>
<svg class="r" style="left:1649px;top:110px;" width="42" height="32" viewBox="0 0 42 32">
<rect x="3" y="3" width="35" height="26" rx="1" fill="none" stroke="#cfcfcf" stroke-width="2"/>
<path d="M9 3 V29 M32 3 V29" stroke="#cfcfcf" stroke-width="1.6"/>
<path d="M6 7 V9 M6 12 V14 M6 17 V19 M6 22 V24 M35 7 V9 M35 12 V14 M35 17 V19 M35 22 V24" stroke="#cfcfcf" stroke-width="1.4"/>
</svg>
<svg class="r" style="left:1704px;top:108px;" width="40" height="37" viewBox="0 0 40 37">
<path d="M3 13 H10 L20 4 V32 L10 24 H3 Z" fill="none" stroke="#cfcfcf" stroke-width="2" stroke-linejoin="round"/>
<path d="M25 13 C27 16 27 21 25 24" fill="none" stroke="#cfcfcf" stroke-width="1.8"/>
<path d="M29 9 C33 14 33 23 29 28" fill="none" stroke="#cfcfcf" stroke-width="1.8"/>
<path d="M33 4 C39 12 39 25 33 33" fill="none" stroke="#cfcfcf" stroke-width="1.8"/>
</svg>
<svg class="r" style="left:1765px;top:105px;" width="44" height="44" viewBox="0 0 44 44">
<rect x="5" y="3" width="32" height="23" fill="none" stroke="#cfcfcf" stroke-width="1.6" stroke-dasharray="4 3"/>
<rect x="3" y="28" width="19" height="13" fill="#4a4a4a" stroke="#cfcfcf" stroke-width="1.8"/>
<path d="M22 32 L28 28 V41 L22 37" fill="none" stroke="#cfcfcf" stroke-width="1.8"/>
<path d="M36 27 V41 M29 34 H43" stroke="#5fc46a" stroke-width="2.2"/>
</svg>
<div class="r" style="left:326px;top:224px;width:4px;height:766px;background:#4e4e4e;"></div>
<div class="t" style="left:16.00px;top:242.26px;font-size:16px;line-height:19px;color:#e0e0e0;font-weight:400;transform:scaleX(0.8989);">1</div>
<div class="t" style="left:15.00px;top:413.66px;font-size:16px;line-height:19px;color:#e0e0e0;font-weight:400;transform:scaleX(1.1011);">2</div>
<div class="r" style="left:43px;top:244px;width:260px;height:148px;background:#ffffff;box-sizing:border-box;border:1px solid #111;border-radius:5px;"></div>
<svg class="r" style="left:44px;top:245px;" width="258" height="146" viewBox="0 0 258 146"><g font-family="Liberation Serif" font-style="italic" fill="#161616" stroke="#161616" stroke-width="0.15"><text x="12.7" y="13.5" font-size="10" textLength="54.0" lengthAdjust="spacingAndGlyphs">Module - 3</text><text x="9.0" y="31.5" font-size="11" textLength="207.0" lengthAdjust="spacingAndGlyphs">#.2 - Small Signal equivalent circuit</text><text x="48.0" y="45.5" font-size="11" textLength="195.0" lengthAdjust="spacingAndGlyphs">Small Signal Voltage &amp; current gain</text><text x="52.0" y="59.5" font-size="10.5" textLength="198.0" lengthAdjust="spacingAndGlyphs">i/p and o/p impedance of CS configuration.</text><text x="6.0" y="75.0" font-size="11" textLength="226.0" lengthAdjust="spacingAndGlyphs">3.3 - CS Stage with current source load,</text><text x="51.0" y="89.0" font-size="11" textLength="191.0" lengthAdjust="spacingAndGlyphs">CS stage with diode - connected load.</text></g><g stroke="#111" stroke-width="1.1" fill="none" stroke-linecap="round"><path d="M26 18 Q41.5 17 57 18"/><path d="M6 35.5 Q19.0 34.5 32 35.5"/><path d="M52 34 Q85.0 33 118 34"/><path d="M128 35 Q168.5 34 209 35"/><path d="M64 47.5 Q87.5 46.5 111 47.5"/><path d="M131 48 Q178.5 47 226 48"/><path d="M62 62.5 Q107.5 61.5 153 62.5"/><path d="M168 62.5 Q201.5 61.5 235 62.5"/><path d="M6 81.5 Q16.0 80.5 26 81.5"/><path d="M136 77 Q176.0 76 216 77"/><path d="M156 92.5 Q197.0 91.5 238 92.5"/><path d="M22 40 l8 -2 l-6 -3 M20 41 l9 -1 M22 90 l8 -2 l-6 -3 M20 91 l9 -1"/></g></svg>
<div class="r" style="left:40px;top:412px;width:266px;height:154px;background:#ffffff;box-sizing:border-box;border:3px solid #c27b7b;border-radius:7px;box-shadow:0 0 0 1px #3a2a2a;"></div>
<div class="r" style="left:329px;top:988px;width:1591px;height:1px;background:#1a1a1a;"></div>
<div class="r" style="left:329px;top:989px;width:1591px;height:2px;background:#8a8a8a;"></div>
<div class="r" style="left:329px;top:991px;width:1591px;height:2px;background:#1f1f1f;"></div>
<div class="r" style="left:460px;top:235px;width:1311px;height:738px;background:#ffffff;box-sizing:border-box;border:1px solid #0a0a0a;"></div>
<svg class="r" style="left:618px;top:418px;" width="10" height="10" viewBox="0 0 10 10"><path d="M5 1 L9 5 L5 9 L1 5 Z" fill="#111"/></svg>
<div class="r" style="left:1897px;top:238px;width:23px;height:681px;background:#383838;"></div>
<svg class="r" style="left:1902px;top:225px;" width="16" height="12" viewBox="0 0 16 12"><path d="M8 2 L14 10 L2 10 Z" fill="#d8d8d8"/></svg>
<div class="r" style="left:1903px;top:572px;width:14px;height:330px;background:#c6c6c6;border-radius:7px;"></div>
<svg class="r" style="left:1903px;top:907px;" width="14" height="12" viewBox="0 0 14 12"><path d="M1 2 L13 2 L7 10 Z" fill="#c8c8c8"/></svg>
<svg class="r" style="left:1902px;top:926px;" width="16" height="38" viewBox="0 0 16 38">
<path d="M8 2 L14 9 L2 9 Z M8 8 L14 15 L2 15 Z" fill="#cfcfcf"/>
<path d="M2 23 L14 23 L8 30 Z M2 29 L14 29 L8 36 Z" fill="#cfcfcf"/>
</svg>
<div class="r" style="left:0px;top:993px;width:1920px;height:29px;background:#303030;"></div>
<div class="t" style="left:9.80px;top:1000.15px;font-size:14px;line-height:17px;color:#e0e0e0;font-weight:400;transform:scaleX(0.9386);">Slide 2 of 2</div>
<svg class="r" style="left:97px;top:997px;" width="24" height="22" viewBox="0 0 24 22">
<path d="M3 3 H10 C11 3 12 4 12 5 C12 4 13 3 14 3 H21 V17 H14 L12 19 L10 17 H3 Z" fill="none" stroke="#e0e0e0" stroke-width="1.8"/>
<path d="M12 5 V17" stroke="#e0e0e0" stroke-width="1.5"/>
<path d="M13 14 L16 17 L21 11" fill="none" stroke="#e0e0e0" stroke-width="1.6"/>
</svg>
<div class="t" style="left:139.00px;top:1000.15px;font-size:14px;line-height:17px;color:#e0e0e0;font-weight:400;transform:scaleX(0.9039);">English (India)</div>
<svg class="r" style="left:239px;top:997px;" width="24" height="22" viewBox="0 0 24 22">
<circle cx="11" cy="4" r="2.2" fill="none" stroke="#e0e0e0" stroke-width="1.5"/>
<path d="M3 8 H19 M11 8 V14 L6 20 M11 14 L15 18" fill="none" stroke="#e0e0e0" stroke-width="1.6"/>
<path d="M14 14 L21 21 M21 14 L14 21" stroke="#e0e0e0" stroke-width="1.6"/>
</svg>
<div class="t" style="left:262.50px;top:1000.15px;font-size:14px;line-height:17px;color:#e0e0e0;font-weight:400;transform:scaleX(0.9084);">Accessibility: Investigate</div>
<svg class="r" style="left:1392px;top:996px;" width="26" height="24" viewBox="0 0 26 24">
<path d="M8 6 L12 3 L16 6" fill="none" stroke="#e6e6e6" stroke-width="1.6"/>
<path d="M2 10 H22 M2 15 H22 M2 20 H22" stroke="#e6e6e6" stroke-width="2"/>
</svg>
<div class="t" style="left:1416.00px;top:1000.15px;font-size:14px;line-height:17px;color:#e6e6e6;font-weight:400;transform:scaleX(0.9563);">Notes</div>
<svg class="r" style="left:1489px;top:996px;" width="24" height="22" viewBox="0 0 24 22">
<rect x="2" y="2" width="19" height="17" fill="none" stroke="#e0e0e0" stroke-width="1.8"/>
<path d="M5 2 V16 H21" fill="none" stroke="#e0e0e0" stroke-width="1.6"/>
<rect x="9" y="7" width="8" height="5" fill="#e0e0e0"/>
</svg>
<svg class="r" style="left:1539px;top:997px;" width="24" height="22" viewBox="0 0 24 22">
<rect x="2" y="2" width="7" height="7" fill="none" stroke="#e0e0e0" stroke-width="2"/>
<rect x="12" y="2" width="7" height="7" fill="none" stroke="#e0e0e0" stroke-width="2"/>
<rect x="2" y="12" width="7" height="7" fill="none" stroke="#e0e0e0" stroke-width="2"/>
</svg>
<div class="r" style="left:1784px;top:1006px;width:40px;height:2px;background:#cfcfcf;"></div>
<svg class="r" style="left:1826px;top:999px;" width="14" height="16" viewBox="0 0 14 16"><path d="M7 2 V14 M1 8 H13" stroke="#d8d8d8" stroke-width="1.8"/></svg>
<div class="t" style="left:1855.00px;top:1000.15px;font-size:14px;line-height:17px;color:#e6e6e6;font-weight:400;transform:scaleX(0.8929);">82%</div>
<svg class="r" style="left:1893px;top:996px;" width="24" height="24" viewBox="0 0 24 24">
<path d="M12 2 L15 5 H9 Z M12 22 L15 19 H9 Z M2 12 L5 9 V15 Z M22 12 L19 9 V15 Z" fill="#e6e6e6"/>
<rect x="6" y="7" width="12" height="10" rx="3" fill="none" stroke="#e6e6e6" stroke-width="2"/>
</svg>
<div class="r" style="left:0px;top:1022px;width:1920px;height:58px;background:#1e1e1e;"></div>
<div class="r" style="left:1101px;top:1024px;width:49px;height:52px;background:#2c2c2c;border-radius:5px;"></div>
<svg class="r" style="left:778px;top:1033px;" width="34" height="34" viewBox="0 0 34 34">
<defs><linearGradient id="wg" x1="0" y1="0" x2="1" y2="1"><stop offset="0" stop-color="#7fe0ff"/><stop offset="1" stop-color="#1a8ee0"/></linearGradient></defs>
<rect x="1" y="1" width="15" height="15" fill="url(#wg)"/><rect x="17.5" y="1" width="15" height="15" fill="url(#wg)"/>
<rect x="1" y="17.5" width="15" height="15" fill="url(#wg)"/><rect x="17.5" y="17.5" width="15" height="15" fill="url(#wg)"/>
</svg>
<svg class="r" style="left:836px;top:1032px;" width="30" height="33" viewBox="0 0 30 33">
<rect x="1" y="1" width="28" height="31" fill="#141a3a"/>
<circle cx="15" cy="14" r="9.5" fill="#f2f2f2"/>
<circle cx="15" cy="14" r="5" fill="#1a1a1a"/>
<path d="M6 29 C8 23 22 23 24 29 Z" fill="#f2f2f2"/>
</svg>
<svg class="r" style="left:888px;top:1034px;" width="36" height="32" viewBox="0 0 36 32">
<path d="M2 4 H13 L16 7 H34 V30 H2 Z" fill="#f0c24a"/>
<rect x="2" y="9" width="32" height="21" fill="#f7d25c"/>
<rect x="10" y="21" width="16" height="9" fill="#2a7fd0"/>
</svg>
<svg class="r" style="left:944px;top:1032px;" width="36" height="34" viewBox="0 0 36 34">
<circle cx="16" cy="18" r="14" fill="#1e1e1e" stroke="#dcdcdc" stroke-width="2.2"/>
<path d="M10 12 a5 5 0 1 1 6 6 M22 16 a5 5 0 1 1 -4 8 M10 24 a5 5 0 1 1 2 -8" fill="none" stroke="#dcdcdc" stroke-width="2"/>
<circle cx="28" cy="7" r="6.5" fill="#e00a0a"/>
</svg>
<div class="r" style="left:958px;top:1070px;width:6px;height:3px;background:#9a9a9a;border-radius:2px;"></div>
<svg class="r" style="left:999px;top:1032px;" width="36" height="34" viewBox="0 0 36 34">
<path d="M4 24 C4 10 10 4 18 4 C26 4 32 10 32 24" fill="none" stroke="#1a2ad8" stroke-width="4"/>
<rect x="2" y="19" width="6" height="11" rx="2" fill="#1a2ad8"/><rect x="28" y="19" width="6" height="11" rx="2" fill="#1a2ad8"/>
<ellipse cx="18" cy="22" rx="9" ry="9" fill="#e8c030"/>
<path d="M10 22 C14 19 22 25 26 21" stroke="#d02020" stroke-width="3" fill="none"/>
</svg>
<svg class="r" style="left:1055px;top:1033px;" width="32" height="32" viewBox="0 0 32 32">
<path d="M2 5 H29 V23 H12 L7 29 V23 H2 Z" fill="#f4f4f4"/>
<path d="M14 21 L28 3" stroke="#d04040" stroke-width="2"/>
</svg>
<svg class="r" style="left:1108px;top:1033px;" width="36" height="34" viewBox="0 0 36 34">
<circle cx="18" cy="16" r="15" fill="#d24726"/>
<path d="M18 1 A15 15 0 0 1 33 16 L18 16 Z" fill="#ff8f6b"/>
<path d="M33 16 A15 15 0 0 1 18 31 L18 16 Z" fill="#ed6c47"/>
<rect x="3" y="8" width="13" height="15" rx="2" fill="#c43e1c"/>
<text x="5.5" y="20.5" font-family="Liberation Sans" font-weight="700" font-size="12" fill="#fff">P</text>
</svg>
<div class="r" style="left:1115px;top:1069px;width:21px;height:4px;background:#6cc0ec;border-radius:2px;"></div>
<svg class="r" style="left:1474px;top:1042px;" width="18" height="14" viewBox="0 0 18 14"><path d="M2 11 L9 4 L16 11" fill="none" stroke="#e6e6e6" stroke-width="1.8"/></svg>
<div class="t" style="left:1789.00px;top:1052.50px;font-size:15px;line-height:18px;color:#f4f4f4;font-weight:400;transform:scaleX(1.0039);">12-04-2025</div>
<div class="t" style="left:1644.50px;top:1054.20px;font-size:13px;line-height:16px;color:#f0f0f0;font-weight:400;transform:scaleX(1.1923);">IN</div>
<svg class="r" style="left:1480px;top:840px;" width="440" height="230" viewBox="0 0 440 230">
<defs>
<linearGradient id="skin" x1="0" y1="0" x2="1" y2="0"><stop offset="0" stop-color="#a88070"/><stop offset="0.25" stop-color="#cca490"/><stop offset="0.5" stop-color="#c29884"/><stop offset="0.78" stop-color="#a47666"/><stop offset="1" stop-color="#845a4c"/></linearGradient>
<linearGradient id="strip" x1="0" y1="0" x2="0" y2="1"><stop offset="0" stop-color="#5a605a"/><stop offset="0.3" stop-color="#aab2aa"/><stop offset="1" stop-color="#c4cbc2"/></linearGradient>
<filter id="bl" x="-20%" y="-20%" width="140%" height="140%"><feGaussianBlur stdDeviation="1.6"/></filter>
<filter id="bl1"><feGaussianBlur stdDeviation="0.9"/></filter>
</defs>
<g filter="url(#bl1)">
<path d="M330 193 H440 V221 H330 Z" fill="url(#strip)"/>
<path d="M380 193 H440 V200 H380 Z" fill="#3a403a"/>
</g>
<g filter="url(#bl)">
<path d="M21 221 C40 195 70 165 100 152 C120 145 138 141 150 140 L240 140 C262 143 282 150 300 165 C318 182 334 200 347 221 Z" fill="#121826"/>
<path d="M40 221 C60 190 90 165 125 150 L140 156 C120 175 105 195 100 221 Z" fill="#18223a" opacity="0.8"/>
<path d="M216 188 L248 186 L252 221 L214 221 Z" fill="#4a3a2a"/>
<path d="M222 190 L225 221 M237 188 L240 221" stroke="#c8b088" stroke-width="3"/>
<path d="M195 47 C172 47 155 60 150 85 C146 100 145 125 147 140 C149 160 158 176 172 184 C180 188 188 189 196 189 C208 189 218 185 228 177 C240 165 247 148 248 130 C250 110 249 95 244 80 C238 58 218 47 195 47 Z" fill="url(#skin)"/>
<ellipse cx="185" cy="70" rx="22" ry="14" fill="#d2ab98" opacity="0.6"/>
<path d="M144 104 C139 75 145 45 165 30 C180 19 210 17 228 27 C246 40 253 65 252 102 C249 90 245 78 240 70 C232 55 215 47 195 47 C172 47 158 57 152 72 C148 82 146 93 144 104 Z" fill="#2a2321"/>
</g>
<ellipse cx="174" cy="116" rx="11" ry="6" fill="#8a6a5e" opacity="0.4" filter="url(#bl1)"/>
<ellipse cx="222" cy="116" rx="11" ry="6" fill="#6a4a40" opacity="0.45" filter="url(#bl1)"/>
<g fill="none" stroke="#52384a" stroke-width="3.4" filter="url(#bl1)">
<path d="M154 101 C167 97 184 98 195 102 C196 113 194 123 186 127 C175 130 164 129 159 125 C155 118 153 108 154 101 Z"/>
<path d="M203 102 C214 98 232 99 241 101 C242 110 240 121 236 125 C226 128 213 128 207 125 C204 118 203 110 203 102 Z"/>
</g>
<path d="M158 95 C168 91 183 91 193 95 M206 95 C216 91 230 91 239 95" stroke="#4a3430" stroke-width="1.6" opacity="0.7" fill="none" filter="url(#bl1)"/>
<path d="M178 155 C188 149 202 149 211 155 C204 163 186 163 178 155 Z" fill="#a06a62" filter="url(#bl1)"/>
<path d="M181 155 C190 153 200 153 208 155" stroke="#5a3a34" stroke-width="1.5" fill="none" filter="url(#bl1)"/>
<path d="M196 124 C195 130 193 134 190 136 C194 137 198 137 201 135" stroke="#8a6050" stroke-width="1.6" fill="none" filter="url(#bl1)"/>
</svg>
<div class="t" style="left:1830.00px;top:1031.50px;font-size:15px;line-height:18px;color:#f0f0f0;font-weight:400;transform:scaleX(0.9333);">10:12</div>
</body></html>
